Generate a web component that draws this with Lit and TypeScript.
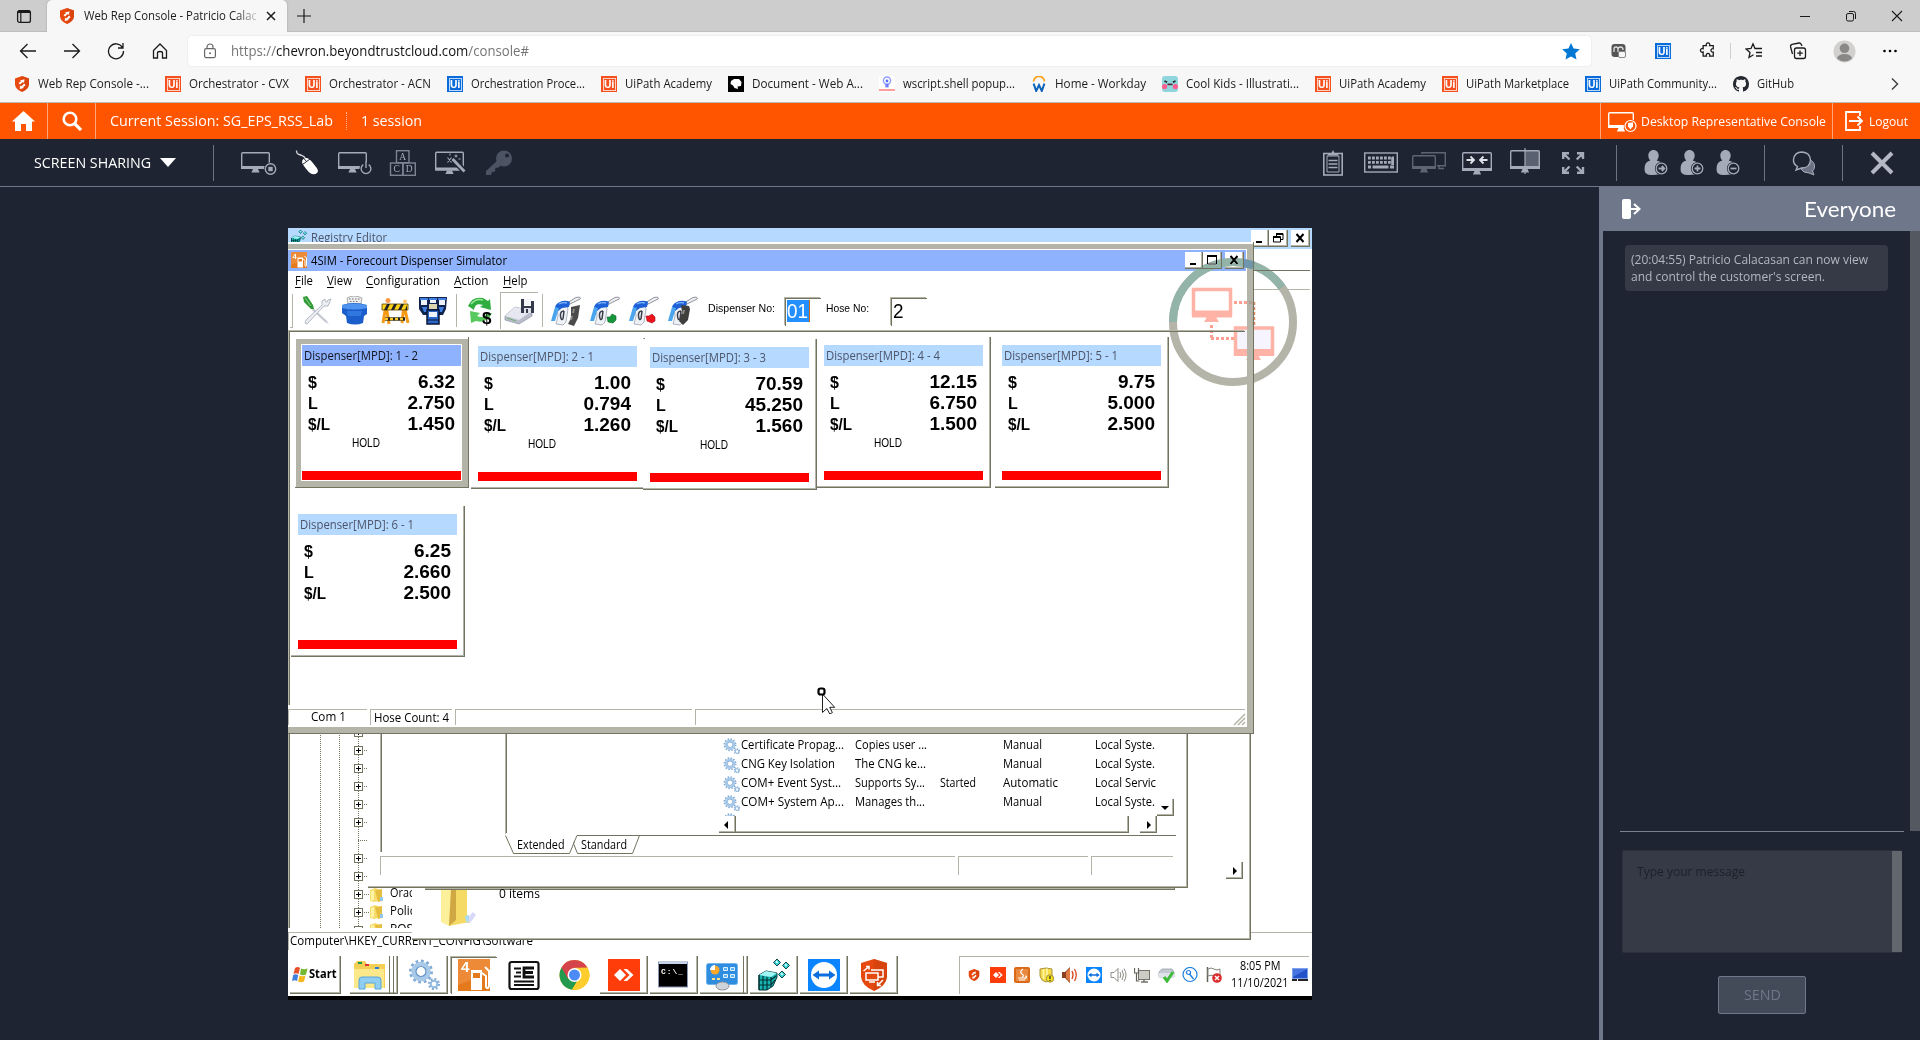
import { LitElement, html, svg, css, nothing } from "lit";
import { customElement, property } from "lit/decorators.js";

/* A single line of text condensed or widened to a given pixel width. */
@customElement("fit-text")
class FitText extends LitElement {
  @property({ type: Number }) w = 0;
  static styles = css`
    :host { display: inline-block; white-space: pre; flex: none; }
    .in { display: inline-block; transform-origin: 0 50%; }
  `;
  render() {
    return html`<span class="in"><slot></slot></span>`;
  }
  updated() {
    const el = this.renderRoot.querySelector(".in") as HTMLElement;
    el.style.transform = "none";
    const n = el.getBoundingClientRect().width;
    if (this.w && n) {
      el.style.transform = `scaleX(${this.w / n})`;
      this.style.width = `${this.w}px`;
    }
  }
}

const ft = (w: number, t: unknown) => html`<fit-text .w=${w}>${t}</fit-text>`;
const pic = (w: number, h: number, body: unknown) =>
  html`<svg width=${w} height=${h} viewBox="0 0 ${w} ${h}">${body}</svg>`;

/* ---------- shared icons ---------- */
const shield = (c = "#e8490f") => svg`
  <path d="M8 0 L15 2.6 V8.5 Q14.6 13 8 16 Q1.4 13 1 8.5 V2.6Z" fill=${c}/>
  <path d="M8 0 L15 2.6 V8.5 Q14.6 13 8 16Z" fill="#c93c08" opacity=".45"/>
  <path d="M6 4.5 L10.5 3.2 L10 7 L8.8 6 L6 8.5 L4.5 7 L7 5.2Z" fill="#fff"/>
  <path d="M10.2 7.6 L11.6 9.3 L9 11.2 L10 12 L5.8 13 L6 9.6 L7.2 10.4Z" fill="#fff"/>`;
const ui = (c: string) => html`<span class="ui" style="background:${c}"><b>Ui</b></span>`;
const OR = "#f4511e", BL = "#0a6cdb";

const bmIcon = (k: string) => {
  switch (k) {
    case "shield": return pic(16, 16, shield());
    case "uo": return ui(OR);
    case "ub": return ui(BL);
    case "doc": return pic(16, 16, svg`<rect width="16" height="16" fill="#000"/><path d="M3 5 L6 3 L11 3 L13.5 6 L13 10 L9.5 10.5 L10 13 L6.5 12 L5 9.5 L2.5 8Z" fill="#fff"/>`);
    case "ws": return pic(16, 16, svg`<rect width="16" height="16" fill="#fff"/><circle cx="8" cy="4.6" r="3.6" fill="none" stroke="#8f9dff" stroke-width="1.4"/><circle cx="8" cy="5" r="1.4" fill="#5a6cff"/><path d="M6.4 8h3.2v3.4H6.4z" fill="#6f7fff"/><path d="M0 14h16" stroke="#ff9d9d" stroke-width="2"/>`);
    case "wd": return pic(16, 16, svg`<path d="M2.6 5.4 A5.4 5 0 0 1 13.4 5.4" fill="none" stroke="#f9a01b" stroke-width="1.8"/><path d="M2.6 7.6 L5.2 15 L8 9 L10.8 15 L13.4 7.6" fill="none" stroke="#0b63b8" stroke-width="2"/>`);
    case "ck": return pic(16, 16, svg`<rect width="16" height="16" rx="3" fill="#8fd6dc"/><circle cx="2.6" cy="10.6" r="2.6" fill="#ff5d8f"/><circle cx="13.4" cy="10.6" r="2.6" fill="#ff5d8f"/><path d="M2.5 5l2.6 1.2M13.5 5l-2.6 1.2" stroke="#222" stroke-width="1.6"/><path d="M5.5 8.4h5" stroke="#5a2030" stroke-width="1.6"/>`);
    default: return pic(16, 16, svg`<path fill="#24292f" d="M8 0C3.58 0 0 3.58 0 8c0 3.54 2.29 6.53 5.47 7.59.4.07.55-.17.55-.38 0-.19-.01-.82-.01-1.49-2.01.37-2.53-.49-2.69-.94-.09-.23-.48-.94-.82-1.13-.28-.15-.68-.52-.01-.53.63-.01 1.08.58 1.23.82.72 1.21 1.87.87 2.33.66.07-.52.28-.87.51-1.07-1.78-.2-3.64-.89-3.64-3.95 0-.87.31-1.59.82-2.15-.08-.2-.36-1.02.08-2.12 0 0 .67-.21 2.2.82.64-.18 1.32-.27 2-.27s1.36.09 2 .27c1.53-1.04 2.2-.82 2.2-.82.44 1.1.16 1.92.08 2.12.51.56.82 1.27.82 2.15 0 3.07-1.87 3.75-3.65 3.95.29.25.54.73.54 1.48 0 1.07-.01 1.93-.01 2.2 0 .21.15.46.55.38A8.01 8.01 0 0 0 16 8c0-4.42-3.58-8-8-8z"/>`);
  }
};
const BOOKMARKS: [string, string, number][] = [
  ["shield", "Web Rep Console -...", 111], ["uo", "Orchestrator - CVX", 100],
  ["uo", "Orchestrator - ACN", 102], ["ub", "Orchestration Proce...", 114],
  ["uo", "UiPath Academy", 87], ["doc", "Document - Web A...", 111],
  ["ws", "wscript.shell popup...", 112], ["wd", "Home - Workday", 91],
  ["ck", "Cool Kids - Illustrati...", 113], ["uo", "UiPath Academy", 87],
  ["uo", "UiPath Marketplace", 103], ["ub", "UiPath Community...", 108],
  ["gh", "GitHub", 37],
];

/* ---------- session toolbar icons, 36 x 32 ---------- */
const G = "#a4aab8";
const mon = (x: number, y: number, w: number, h: number, c = G) => svg`
  <rect x=${x + 0.7} y=${y + 0.7} width=${w - 1.4} height=${h - 1.4} rx="1" fill="none" stroke=${c} stroke-width="1.4"/>
  <rect x=${x} y=${y + h - 3} width=${w} height="3" fill=${c}/>
  <path d="M${x + w / 2 - 2.5} ${y + h}h5l1.6 3.4h-8.2z" fill=${c}/>`;
const person = (m: unknown) => svg`
  <path d="M15.500 3c3 0 5.200 2.400 5.200 5.600 0 2-.8 3.600-2 5 4 1 7.300 3 7.300 8 0 5-3 6.400-10.500 6.400C8 28 6.600 26 6.600 22c0-5 2-7.400 5.700-8.400-1.300-1.400-2-3-2-5C10.300 5.400 12.500 3 15.500 3Z" fill="${G}"/>
  <circle cx="23.500" cy="21.500" r="6.600" fill="#1e2431"/><circle cx="23.500" cy="21.500" r="5.300" fill="#1e2431" stroke="${G}" stroke-width="1.300"/>
  <g stroke="${G}" stroke-width="1.800" fill="none">${m}</g>`;
const LEFT = [
  svg`${mon(0, 5, 29, 17)}<circle cx="29.500" cy="22" r="6.500" fill="#1e2431"/><circle cx="29.500" cy="22" r="5.200" fill="none" stroke="${G}" stroke-width="1.400"/><rect x="27.300" y="19.800" width="4.400" height="4.400" fill="${G}"/>`,
  svg`<path d="M7.500 3.500c0 4 1.500 3.500 4 4.500s4 1 5 4" fill="none" stroke="#cfd3dc" stroke-width="1.400"/><path d="M14 12.500c3-3 6.500-1 9.500 3s7.500 8 4.500 10.500-7 1-9.500-2.500-7.500-8-4.500-11Z" fill="#fff"/><path d="M13.500 17.500l7.500-5.500M17.500 14.500l-3-3.500" stroke="#1e2431" stroke-width="1"/>`,
  svg`${mon(1, 5, 29, 17)}<circle cx="29" cy="21.500" r="6.500" fill="#1e2431"/><path d="M26.300 17.600a4.900 4.900 0 1 0 5.400 0M29 14.500v6.500" fill="none" stroke="${G}" stroke-width="1.400"/>`,
  svg`<g fill="none" stroke="#7c8494" stroke-width="1.400"><rect x="11.500" y="3.700" width="12.500" height="12"/><rect x="5.500" y="16" width="12.300" height="12.300"/><rect x="18" y="16" width="12.300" height="12.300"/></g><g font-family="Liberation Serif" font-size="9.500" fill="${G}" text-anchor="middle"><text x="17.800" y="13">A</text><text x="11.700" y="25.400">C</text><text x="24.200" y="25.400">D</text></g>`,
  svg`${mon(2, 4.5, 29, 19)}<path d="M19 11l13 14" stroke="#1e2431" stroke-width="6"/><path d="M19.500 12l12 12.500" stroke="${G}" stroke-width="2.800"/><path d="M14.500 10.500l4 5M18.500 10.500l-4 5M23 7.500v3M21.500 9h3M17 6.500v2M25.500 12h2" stroke="${G}" stroke-width="1.100"/>`,
  svg`<circle cx="23" cy="11.500" r="8" fill="#4c5362"/><circle cx="26" cy="8.500" r="2" fill="#1e2431"/><path d="M18 12L5 24v4h5l1-3 3-.5.5-3.500 3-.5 5-5z" fill="#4c5362"/>`,
];
const RIGHT = [
  svg`<rect x="8.800" y="6.500" width="18.400" height="21.500" fill="none" stroke="${G}" stroke-width="1.600"/><path d="M12 9h12v16H12z" fill="none" stroke="${G}" stroke-width="1"/><path d="M12 8.500h12l-2-2.500h-2.500l-1.500-3-1.500 3H14z" fill="${G}"/><path d="M13.500 13.500h9M13.500 17h9M13.500 20.500h9" stroke="${G}" stroke-width="1.600"/>`,
  svg`<rect x="1.700" y="6" width="32.600" height="19" fill="none" stroke="${G}" stroke-width="1.400"/><path d="M5 11h26M5 15.300h26" stroke="${G}" stroke-width="2.800" stroke-dasharray="2.800 1.200"/><path d="M5 20h3M9.500 20h16M27 20h4M29.600 10v8" stroke="${G}" stroke-width="2.800"/>`,
  svg`<g opacity=".48"><path d="M11 7V5.700h23.300v13H26M28 19v2.500h5" fill="none" stroke="${G}" stroke-width="1.400"/>${mon(1, 8, 24, 14)}</g>`,
  svg`${mon(3, 5, 30, 19)}<path d="M7.500 13h7M11.500 9.500l3.500 3.500-3.500 3.500M28.500 13h-7M24.500 9.500L21 13l3.500 3.500" fill="none" stroke="#dfe2e8" stroke-width="1.800"/>`,
  svg`<rect x="18" y="4" width="14" height="15" fill="#5a6170"/>${mon(3, 3, 30, 19)}<path d="M18 1v26" stroke="${G}" stroke-width="1.200"/>`,
  svg`<g fill="none" stroke="${G}" stroke-width="2.400"><path d="M8.200 12V6.200H14M8.500 6.500l6 6M28 12V6.200H22M27.700 6.500l-6 6M8.200 20v5.800H14M8.500 25.500l6-6M28 20v5.800H22M27.700 25.500l-6-6"/></g>`,
];
const PEOPLE = [
  person(svg`<path d="M20.500 21.500h5.500M23.800 19l2.500 2.500-2.500 2.500"/>`),
  person(svg`<path d="M20.500 21.500h6M23.500 18.500v6"/>`),
  person(svg`<path d="M20.500 21.500h6"/>`),
];

/* ---------- remote desktop ---------- */
const T = (x: number, cy: number, w: number, t: unknown, cls = "") =>
  html`<fit-text class="t ${cls}" style="left:${x - 0.5}px;top:${cy - 10.5}px" .w=${w}>${t}</fit-text>`;
const P = (x: number, y: number, w: number, h: number, body: unknown, cls = "") =>
  html`<svg class="p ${cls}" style="left:${x}px;top:${y}px" width=${w} height=${h} viewBox="0 0 ${w} ${h}">${body}</svg>`;
const B = (cls: string, x: number, y: number, w: number, h: number, body: unknown = nothing) =>
  html`<div class="b ${cls}" style="left:${x}px;top:${y}px;width:${w}px;height:${h}px">${body}</div>`;

const pump = svg`<rect width="32" height="32" fill="#e57a1c"/><path d="M0 0h32v14L0 26z" fill="#f0954a" opacity=".6"/><path d="M13 11h11v20H13z" fill="#fff"/><path d="M15 14h7v5h-7z" fill="#e57a1c"/><path d="M24 14l4 3v11q2 3 3-1V12l-4-4" fill="none" stroke="#fff" stroke-width="2"/><text x="3" y="13" font-family="Liberation Sans" font-weight="bold" font-size="15" fill="#fff">4</text>`;
const gear = svg`<circle cx="13" cy="12.500" r="10" fill="none" stroke="#7fa9d4" stroke-width="4" stroke-dasharray="2.600 2.600"/><circle cx="13" cy="12.500" r="7.500" fill="#fff" stroke="#a9c9e8" stroke-width="4.500"/><circle cx="13" cy="12.500" r="5" fill="#fff" stroke="#5f92c8" stroke-width="1.200"/><circle cx="26" cy="25" r="4.500" fill="none" stroke="#7fa9d4" stroke-width="3" stroke-dasharray="1.800 1.700"/><circle cx="26" cy="25" r="3.300" fill="#fff" stroke="#94bbe0" stroke-width="2"/>`;
const folder = svg`<path d="M0 2l5-2 3 1v12l-4 1-4-1z" fill="#f6dc6c"/><path d="M5 2l7-1v12l-4 1z" fill="#e5bd3f"/><path d="M1 3l3-1v10l-3 1z" fill="#fff3a6"/><path d="M10 9h3v4h-3z" fill="#8fc7ee"/>`;
const cubes = svg`<path d="M1 16l7-4 11 2v4l-4 9-6 4H1z" fill="#18b3b3" stroke="#033" stroke-width="1"/><path d="M1 16l7-4 11 2-6 4z" fill="#9ff4f4"/><path d="M5 17v14M9 18v13M13 18v10M1 21h12l5-4M1 26h12l4-5M1 16v15" stroke="#033" stroke-width="1.200" fill="none"/><g fill="#35cfd4" stroke="#033" stroke-width=".9"><path d="M19 0l3.500 3.500L19 7l-3.500-3.500zM28 3l3.500 3.500L28 10l-3.500-3.500zM24 12l3.500 3.500L24 19l-3.500-3.500z"/></g><path d="M18 2l1.500 2M27 5l1.500 2M23 14l1.500 2" stroke="#dff" stroke-width="1.500"/>`;
const tv = svg`<rect width="32" height="32" fill="#0a84ff"/><circle cx="16" cy="16" r="13" fill="#fff"/><path d="M4.500 16l6.500-4.500v3h10v-3l6.500 4.500-6.500 4.500v-3H11v3z" fill="#0a6ee0"/>`;
const anyd = svg`<rect width="32" height="32" fill="#ff3d0a"/><path d="M6 16l6-6 6 6-6 6z" fill="#fff"/><path d="M15.500 10h3.500l6.500 6-6.500 6h-3.500l6-6z" fill="#fff"/>`;
const nozzle = (extra: unknown) => svg`
  <path d="M16 7l9-5.500q4-1 4.500.5-.2 1.700-2.500 2L18 8.500z" fill="#f0f1f4" stroke="#80858f" stroke-width=".9"/>
  <path d="M6 12l10-2 1 3-2 13-3 3-7-1 2-8z" fill="#eff2f7" stroke="#9aa1b0" stroke-width=".8"/>
  <path d="M4 11q1-4 7-6 5-1 8 1l-1 5-7 1-4 3z" fill="#1c5fd6"/><path d="M8 8q4-2 8-1" stroke="#7db4f5" stroke-width="1.300" fill="none"/>
  <path d="M4 11l4 1-4 13-4 0z" fill="#4aa4ee"/>
  <path d="M13 15q-4 0-3.500 5t2.500 3M13 15l-1 8" fill="none" stroke="#3a3e48" stroke-width="1.500"/>${extra}`;
const TOOLS: [number, unknown][] = [
  [14, svg`<path d="M11 12l13 12 3 4-4-2-13-12z" fill="#c2c6d0"/><path d="M29 3l-3 1-1 2-2-1 0-2-3 2 0 4L4 24q-2 4 1 4l17-18 4 0z" fill="#eceef3" stroke="#a3a8b6" stroke-width=".8"/><path d="M1 1l4-1 6 9 1 4-3 0-7-7z" fill="#2f9a35"/><path d="M3 2l6 8" stroke="#8fd08a" stroke-width="1"/>`],
  [53, svg`<path d="M6 2q7-4 15 0l-1 6H7z" fill="#ececec" stroke="#999" stroke-width=".8"/><path d="M8 3h11M9 5.500h9" stroke="#777" stroke-dasharray="1.500 1.500"/><path d="M1 9q12-4 25 0v9l-3 2-1 7q-8 3-16 0l-1-7-4-3z" fill="#1b5ecb"/><path d="M1 9q12-3 25 0v3q-13 3-25 0z" fill="#4d93ef"/><path d="M6 15h15l-1 5H7z" fill="#3078df"/>`],
  [92, svg`<path d="M6 9L3 27M6 9l3 19M24 9l-2 18M24 9l4 18" stroke="#f59a14" stroke-width="3" fill="none"/><path d="M5 23h20" stroke="#222" stroke-width="3.500"/><path d="M5 23h20" stroke="#ffc928" stroke-width="2.600" stroke-dasharray="3 2"/><path d="M2 8h26v6H2z" fill="#ffd21a" stroke="#5a4200" stroke-width=".8"/><path d="M4 14l3-6h3l-3 6zM11 14l3-6h3l-3 6zM18 14l3-6h3l-3 6zM25 14l2-5v5z" fill="#222"/><circle cx="8" cy="4.500" r="2.500" fill="#ff9a4a"/><circle cx="25" cy="5.500" r="2" fill="#ffc46a"/>`],
  [130, svg`<path d="M1 1h28l-1 12-3 6H5l-4-6z" fill="#10244f"/><path d="M3 4h6v5H3zM12 4h6v3h-6zM21 4h6v5h-6z" fill="#eef3fb"/><path d="M2 2h8v2H2zM11 2h8v2h-8zM20 2h8v2h-8z" fill="#3f7fe0"/><path d="M4 11h5v5H6zM21 11h5l-2 5h-3z" fill="#3f7fe0"/><path d="M11 8h8v5h-8z" fill="#dcd6b0"/><path d="M9 14h12v14H9z" fill="#2a66c4" stroke="#0a1638" stroke-width="1.500"/><path d="M11 16h8v5h-8z" fill="#eef3fb"/><path d="M9 24h12" stroke="#0a1638"/>`],
  [178, svg`<path d="M2 10Q6 0 17 2l5 3 2-2 1 11-11-3 3-2q-8-3-9 5z" fill="#2fae3f"/><path d="M5 8q5-6 12-4" stroke="#9ae59a" stroke-width="1.500" fill="none"/><path d="M26 17q-5 11-16 8l-5 2-1-12 10 2-3 3q7 3 10-3z" fill="#57c95f"/><text x="16" y="28" font-family="Liberation Sans" font-weight="bold" font-size="17" fill="#000">$</text>`],
  [216, svg`<path d="M1 20l10-9 17 4v5l-13 8-14-4z" fill="#b9bccb" stroke="#8f93a4" stroke-width=".7"/><path d="M1 20l10-9 17 4-13 9z" fill="#e6e7f0"/><path d="M3 22l9 3" stroke="#6fb26f" stroke-width="1"/><path d="M17 3h3v7h7V5h3v12H17z" fill="#343a4a"/><path d="M20 3h7v6h-7z" fill="#f4f4f8"/><path d="M20 12h7v5h-7z" fill="#dfe2ea"/><path d="M22 13h2v4h-2z" fill="#343a4a"/>`],
  [263, nozzle(svg`<path d="M20 11l9-2-2 13-4 8-6-2 3-6z" fill="#4a4b4a"/><path d="M22 13l2 0-1 4-2 0zM20 20l2 0-1 4-2 0z" fill="#8b8d88"/>`)],
  [302, nozzle(svg`<path d="M17 21l3 0 2-3 4 2 0 4-3 3-5-1z" fill="#16953b" stroke="#0c6a28" stroke-width=".6"/>`)],
  [341, nozzle(svg`<path d="M17 20l3 0 3-2 3 3 0 4-3 2-5-2z" fill="#ee131d" stroke="#a30f16" stroke-width=".6"/>`)],
  [380, nozzle(svg`<path d="M13 9l8 1 1 3-2 11-5 5-4-4 3-9z" fill="#3e3f3d"/><path d="M15 14l2 0-1 4-2 0z" fill="#8b8d88"/>`)],
];

interface Card { x: number; y: number; n: string; a: string; l: string; p: string; hold: boolean; on?: boolean }
const CARDS: Card[] = [
  { x: 14, y: 117, n: "1 - 2", a: "6.32", l: "2.750", p: "1.450", hold: true, on: true },
  { x: 190, y: 118, n: "2 - 1", a: "1.00", l: "0.794", p: "1.260", hold: true },
  { x: 362, y: 119, n: "3 - 3", a: "70.59", l: "45.250", p: "1.560", hold: true },
  { x: 536, y: 117, n: "4 - 4", a: "12.15", l: "6.750", p: "1.500", hold: true },
  { x: 714, y: 117, n: "5 - 1", a: "9.75", l: "5.000", p: "2.500", hold: false },
  { x: 10, y: 286, n: "6 - 1", a: "6.25", l: "2.660", p: "2.500", hold: false },
];
const card = (c: Card) => html`
  <div class="card ${c.on ? "on" : ""}" style="left:${c.x - 7}px;top:${c.y - 8}px">
    <div class="face">
      <div class="ct">${ft(114, `Dispenser[MPD]: ${c.n}`)}</div>
      <div class="row"><b>$</b><i>${c.a}</i></div>
      <div class="row"><b>L</b><i>${c.l}</i></div>
      <div class="row"><b>${ft(22, "$/L")}</b><i>${c.p}</i></div>
      <div class="hold">${c.hold ? ft(28, "HOLD") : nothing}</div>
      <div class="red"></div>
    </div>
  </div>`;

const SERVICES: [string, number, string, number, string, string, number, string, number][] = [
  ["Certificate Propag...", 103, "Copies user ...", 72, "", "Manual", 39, "Local Syste.", 60],
  ["CNG Key Isolation", 94, "The CNG ke...", 71, "", "Manual", 39, "Local Syste.", 60],
  ["COM+ Event Syst...", 100, "Supports Sy...", 70, "Started", "Automatic", 55, "Local Servic", 61],
  ["COM+ System Ap...", 103, "Manages th...", 70, "", "Manual", 39, "Local Syste.", 60],
];
const winBtn = (x: number, y: number, w: number, k: string) => B("wb", x, y, w, 17, html`
  <svg width="18" height="16" viewBox="0 0 18 16" fill="none" stroke="#000" stroke-width="2">${
    k === "min" ? svg`<path d="M5 12h6"/>` :
    k === "max" ? svg`<path d="M4 4h10" stroke-width="2"/><path d="M4.500 3.500h9v8.500h-9z" stroke-width="1"/>` :
    k === "res" ? svg`<path d="M7 4h7M4 7h7" stroke-width="2"/><path d="M7.500 6V3.500h6.500v6h-2.500M4.500 6.500h7v5.500h-7z" stroke-width="1"/>` :
    svg`<path d="M5.500 4l7 8M12.500 4l-7 8"/>`}</svg>`);
const TREE = [504, 522, 540, 558, 576, 594, 612, 630, 648, 666, 684, 702];

@customElement("remote-desktop")
class RemoteDesktop extends LitElement {
  static styles = css`
    :host { display: block; position: relative; width: 1024px; height: 772px; background: #fff; overflow: hidden; font: 12px/20px "Open Sans", "Noto Sans", sans-serif; color: #000; }
    .t, .p, .b, .card { position: absolute; box-sizing: border-box; }
    .t { line-height: 20px; }
    .arial { font-family: "Liberation Sans", sans-serif; }
    .small { font-size: 11.500px; }
    .big { font-family: "Liberation Sans", sans-serif; font-size: 20px; }
    .bold { font-weight: 700; }
    .dim { color: #4d5468; }
    .white { color: #fff; }
    u { text-underline-offset: 2px; }
    .lb { background: #b5d9ff; }
    .tb { background: #8fb2ff; }
    .gray { background: #b4b4a8; }
    .dark { background: #73735f; }
    .black { background: #000; }
    .sel { background: #2490ff; border-right: 1px solid #d06a10; }
    .w { background: #fff; }
    .clip { overflow: hidden; }
    .veil { mix-blend-mode: darken; }
    .wb { background: #fff; border-right: 1px solid #73735f; border-bottom: 1px solid #73735f; box-shadow: inset -1px -1px #b4b4a8; }
    .wb svg { display: block; }
    .out { background: #fff; border-right: 1px solid #73735f; border-bottom: 1px solid #73735f; box-shadow: inset -1px -1px #b4b4a8; }
    .in { border-top: 1px solid #b4b4a8; border-left: 1px solid #b4b4a8; }
    .inp { border-top: 1px solid #73735f; border-left: 1px solid #73735f; box-shadow: -1px -1px #b4b4a8; }
    .card { width: 174px; height: 151px; padding: 8px 7px; background: #fff; border-right: 1px solid #73735f; border-bottom: 1px solid #73735f; box-shadow: inset -1px -1px #b4b4a8; }
    .card.on { background: linear-gradient(#b4b4a8, #b4b4a8) 1px 2px / 100% 100% no-repeat #fff; box-shadow: none; }
    .face { width: 159px; height: 135px; background: #fff; display: flex; flex-direction: column; }
    .on .face { box-shadow: 0 0 0 1px #fff; }
    .ct { height: 21px; line-height: 21px; padding-left: 2px; background: #b5d9ff; color: #4d5468; margin-bottom: 5px; }
    .on .ct { background: #8fb2ff; color: #10131c; }
    .row { height: 21px; display: flex; justify-content: space-between; align-items: center; padding: 0 6px 0 6px; font-family: "Liberation Sans", sans-serif; }
    .row b { font-size: 16px; position: relative; top: 1px; }
    .row i { font: bold 19px/20px "Liberation Sans", sans-serif; }
    .hold { height: 37px; padding: 0 0 0 50px; line-height: 18px; font-family: "Liberation Sans", sans-serif; font-size: 12px; box-sizing: border-box; }
    .red { height: 9px; background: #f00; }
  `;
  render() {
    return html`
      ${B("lb", 0, 0, 1024, 21)}
      ${P(3, 2, 16, 16, svg`<g transform="scale(.5)">${cubes}</g>`)}
      ${T(23, 10.5, 76, "Registry Editor", "dim")}
      ${winBtn(963, 2, 18, "min")}${winBtn(981, 2, 19, "res")}${winBtn(1003, 2, 19, "x")}
      ${B("dark", 965, 42, 57, 1)}${B("gray", 965, 61, 57, 1)}
      ${B("gray", 962, 704, 62, 1)}

      ${B("gray", 0, 505, 1, 195)}${B("dark", 1, 505, 1, 195)}
      <div class="b clip" style="left:0;top:505px;width:124px;height:195px">
        <svg class="p" style="left:0;top:0" width="124" height="195" viewBox="0 505 124 195">
          <g stroke="#73735f" stroke-dasharray="1 1"><path d="M32.500 505v195M51.500 505v195M70.500 505v195"/>
          ${TREE.map((y) => svg`<path d="M70 ${y + 0.5}H${y > 660 ? 82 : 79}"/>`)}</g>
          ${TREE.filter((y) => y !== 612).map((y) => svg`<rect x="66.500" y=${y - 3.5} width="8" height="8" fill="#fff" stroke="#73735f"/><path d="M68 ${y + 0.5}h5M70.500 ${y - 2}v5" stroke="#000"/>`)}
        </svg>
        ${P(82, 155, 14, 14, folder)}${P(82, 172, 14, 14, folder)}${P(82, 190, 14, 14, folder)}
        ${T(102, 160.5, 33, "Oracle")}${T(102, 178.5, 40, "Policies")}${T(102, 196, 23, "POS")}
      </div>
      ${B("gray", 0, 704, 124, 1)}${B("gray", 0, 704, 1, 18)}
      ${T(2.5, 713.5, 243, "Computer\\HKEY_CURRENT_CONFIG\\Software")}

      ${B("out", 124, 490, 839, 222)}
      ${B("out", 137, 490, 750, 172)}
      ${P(153, 662, 36, 38, svg`<path d="M22 33l10-11 3 3-6 8z" fill="#d9d9fb"/><path d="M0 0h10v34l-2 2-8-4z" fill="#fdf09a"/><path d="M10 0h16v24l2 8-10 2-10 2z" fill="#f6da66"/><path d="M10 0h5v30l-7 6z" fill="#cfa844"/><path d="M24 26l4-1v6l-3 1z" fill="#a9dcf5"/>`)}
      ${T(211, 666.5, 41, "0 items")}
      ${B("out", 938, 634, 17, 17)}${P(943, 638, 8, 10, svg`<path d="M2 1l4 4-4 4z"/>`)}

      ${B("out", 80, 490, 820, 170)}
      ${B("gray", 92, 490, 1, 134)}${B("dark", 93, 490, 1, 134)}
      ${B("gray", 217, 490, 1, 116)}${B("dark", 218, 490, 1, 115)}
      ${SERVICES.map((s, i) => {
        const y = 517.5 + i * 19;
        return html`${P(435, y - 8, 17, 16, svg`<g transform="scale(.54)">${gear}</g>`)}
          ${T(453.5, y, s[1], s[0])}${T(567, y, s[3], s[2])}
          ${s[4] ? T(652.5, y, 36, s[4]) : nothing}
          ${T(715, y, s[6], s[5])}${T(807, y, s[8], s[7])}`;
      })}
      ${P(435, 585, 17, 3, svg`<g transform="scale(.54)">${gear}</g>`)}
      ${B("out", 431, 588, 17, 17)}${B("out", 448, 588, 393, 17)}${B("out", 852, 588, 17, 17)}${B("out", 869, 571, 17, 17)}
      ${P(434, 592, 8, 10, svg`<path d="M6 1l-4 4 4 4z"/>`)}${P(857, 592, 8, 10, svg`<path d="M2 1l4 4-4 4z"/>`)}${P(872, 576, 10, 8, svg`<path d="M1 2l4 4 4-4z"/>`)}
      ${P(216, 605, 674, 22, svg`<g fill="none" stroke="#73735f"><path d="M1.500 2.500l8 18h56l5-12M73 2.500h599M73 2.500l-3.500 8 4 10h55l7-18"/></g>`)}
      ${T(229, 617, 47.5, "Extended")}${T(293.5, 617, 46, "Standard")}
      ${B("in", 92, 628, 575, 19)}${B("in", 670, 628, 130, 19)}${B("in", 803, 628, 82, 19)}

      <div class="b w" style="left:0;top:14px;width:966px;height:492px"></div>
      ${B("gray", 0, 16, 965, 5)}${B("gray", 959, 16, 6, 489)}${B("gray", 0, 499, 965, 6)}
      ${B("dark", 965, 14, 1, 492)}${B("dark", 0, 505, 966, 1)}
      ${B("tb", 0, 22, 958, 21)}
      ${P(3, 24, 16, 16, svg`<g transform="scale(.5)">${pump}</g>`)}
      ${T(23.5, 33, 196, "4SIM - Forecourt Dispenser Simulator")}
      ${winBtn(897, 24, 18, "min")}${winBtn(915, 24, 19, "max")}${winBtn(937, 24, 19, "x")}
      ${T(7, 53.5, 18, html`<u>F</u>ile`)}${T(39, 53.5, 25, html`<u>V</u>iew`)}${T(78, 53.5, 74, html`<u>C</u>onfiguration`)}${T(166, 53.5, 34.5, html`<u>A</u>ction`)}${T(215, 53.5, 24.5, html`<u>H</u>elp`)}

      ${B("gray", 4, 66, 1, 33)}${B("gray", 2, 99, 3, 1)}${B("gray", 168, 66, 1, 33)}${B("gray", 254, 66, 1, 33)}
      ${B("in", 212, 64, 38, 37)}
      ${TOOLS.map(([x, b]) => P(x, 68, 32, 31, b))}
      ${T(420.5, 80, 67, "Dispenser No:", "arial small")}${T(538.5, 80, 43, "Hose No:", "arial small")}
      ${B("inp", 497, 70, 36, 28)}${B("sel", 499, 72, 23, 22)}${T(499.5, 83, 21, "01", "big white")}
      ${B("inp", 603, 70, 36, 28)}${T(605.5, 83, 10.5, "2", "big")}
      ${B("gray", 0, 102, 956, 1)}${B("dark", 1, 103, 956, 1)}${B("gray", 0, 102, 1, 375)}${B("dark", 1, 103, 1, 374)}

      ${CARDS.map(card)}

      ${B("in", 0, 481, 79, 16)}${B("in", 82, 481, 82, 16)}${B("in", 167, 481, 237, 16)}${B("in", 407, 481, 550, 16)}
      ${T(23.5, 489, 35, "Com 1")}${T(86.5, 490, 75, "Hose Count: 4")}
      ${P(945, 485, 13, 13, svg`<path d="M1 12L12 1M5 12l7-7M9 12l3-3" stroke="#b4b4a8" stroke-width="1.500"/>`)}

      ${this.taskbar()}

      ${P(880, 29, 130, 130, svg`
        <circle cx="65" cy="65" r="60" fill="none" stroke="#b4b4a8" stroke-width="8"/>
        <path d="M5 65A60 60 0 0 1 114 30.500" fill="none" stroke="#92b4a9" stroke-width="8"/>
        <path d="M75.500 6A60 60 0 0 1 85.500 8.500" fill="none" stroke="#6f95b5" stroke-width="8"/>
        <g fill="none" stroke="#ffb3a7" stroke-width="3.500"><rect x="25.500" y="32.500" width="37" height="25.500"/><rect x="67.500" y="71" width="37" height="25.500" fill="#e0dcff" fill-opacity=".3"/></g>
        <g fill="#ffb3a7"><path d="M24 53.500h40v7H24zM39 60h9l3 5H36zM66 92h40v7H66zM81 98h9l3 5H78z"/></g>
        <path d="M66 45.500h20" stroke="#ff9f92" stroke-width="3" stroke-dasharray="3 2"/><path d="M86 45v25" stroke="#e0895f" stroke-width="2.500" stroke-dasharray="3 2"/>
        <path d="M43.500 68v14M43 81.500h24" stroke="#ff9f92" fill="none" stroke-width="3" stroke-dasharray="3 2"/>`, "veil")}
      ${P(528, 458, 20, 28, svg`<path d="M6.500 8v18.500l4.300-4 3 5.500 2.600-1.400-2.700-5.300h5z" fill="#fff" stroke="#222"/><rect x="2.500" y="2.500" width="6" height="6" rx="2" fill="#fff" stroke="#000" stroke-width="2.200"/>`)}
      ${B("black", 0, 768, 1024, 4)}
    `;
  }
  taskbar() {
    return html`
      ${B("out", 2, 728, 51, 38)}
      ${P(4, 738, 17, 17, svg`<path d="M3 2q3-2 5 0L6.500 8q-2.500-1.500-5 0z" fill="#e8502a"/><path d="M9 2.500q3 1.500 6.500 0L14 8.500q-3 1.500-6 0z" fill="#73b82e"/><path d="M1.200 9q2.500-1.500 5 0L5 15q-2.500-1.500-5 0z" fill="#3f7fe0"/><path d="M7.500 9.500q3 1.500 6 0L12 15.500q-3 1.500-6 0z" fill="#f7b81e"/>`)}
      ${T(21, 746.5, 27.5, "Start", "bold")}
      ${B("out", 62, 728, 48, 38)}${B("dark", 101, 728, 1, 37)}${B("dark", 105, 728, 1, 37)}
      ${P(66, 731, 32, 32, svg`<path d="M0 5l3-3h8l2 3h18v24H0z" fill="#f3cf55"/><path d="M0 10h30v19H0z" fill="#fbe88a"/><path d="M4 3h4v2H4z" fill="#1a9a4a"/><path d="M11 5h4v2h-4z" fill="#d33"/><path d="M21 8h4v2h-4z" fill="#2b7fd0"/><path d="M5 30v-9q0-3 3-3h16q3 0 3 3v9h-6v-6H11v6z" fill="#8fcdf2" stroke="#5ba6d8"/>`)}
      ${B("out", 112, 728, 48, 38)}${P(120, 731, 32, 32, gear)}
      ${B("inp", 163, 729, 46, 37)}${P(170, 731, 32, 32, pump)}
      ${P(220, 732, 32, 31, svg`<rect x="1.500" y="2" width="29" height="27" rx="2" fill="#fff" stroke="#111" stroke-width="2.200"/><path d="M6 8.500h7M8 12.500h5M6 16.500h7M6 21.500h20M6 25h20" stroke="#111" stroke-width="2"/><path d="M26 8H16v9h10M16 12.500h9" stroke="#111" stroke-width="2.800" fill="none"/>`)}
      ${P(271, 731, 32, 32, svg`<circle cx="15.500" cy="16" r="15" fill="#fccd2c"/><path d="M15.500 16L2.500 8.500A15 15 0 0 0 13 30.800L20 19z" fill="#249a4e"/><path d="M2.500 8.500A15 15 0 0 1 28.500 8.700H15.500L9 19.700z" fill="#d5434b"/><path d="M28.500 8.700A15 15 0 0 1 13 30.800L22 16 18 9z" fill="#fccd2c"/><circle cx="15.500" cy="16" r="7" fill="#fff"/><circle cx="15.500" cy="16" r="5.500" fill="#4c8bf5"/>`)}
      ${B("out", 312, 728, 48, 38)}${P(320, 731, 32, 32, anyd)}
      ${B("out", 362, 728, 48, 38)}${P(370, 733, 31, 28, svg`<rect x=".5" y="1" width="29" height="25" fill="#000" stroke="#8a97b5"/><path d="M1 2h28" stroke="#c6d3ea" stroke-width="2"/><text x="3" y="13" font-family="Liberation Mono" font-weight="bold" font-size="8" textLength="22" fill="#fff">C:\\_</text>`)}
      ${B("out", 412, 728, 48, 38)}${B("dark", 455, 728, 1, 37)}
      ${P(418, 733, 33, 30, svg`<rect x=".5" y="2.500" width="31" height="21" rx="2" fill="#2f8de0" stroke="#6fb4ee"/><circle cx="9" cy="9" r="4.500" fill="#f9a82a"/><path d="M9 9V4a5 5 0 0 0-5 5z" fill="#fff"/><path d="M17.500 6.500h4v3h-4zM24.500 6.500h4v3h-4zM17.500 13.500h4v3h-4zM24.500 13.500h4v3h-4z" fill="#5fb0f4" stroke="#dff0ff"/><path d="M6 18h3M11 18h3" stroke="#ffe08a" stroke-width="2"/><ellipse cx="16.500" cy="25" rx="6.500" ry="4" fill="#cfd3da" stroke="#8f939b"/>`)}
      ${B("out", 462, 728, 48, 38)}${P(470, 731, 33, 32, cubes)}
      ${B("out", 512, 728, 48, 38)}${P(520, 731, 32, 32, tv)}
      ${B("out", 562, 728, 48, 38)}
      ${P(572, 731, 29, 32, svg`<path d="M14 0l13 4v14q-1 9-13 14Q2 27 1 18V4z" fill="#e5490f"/><path d="M14 0l13 4v14q-1 9-13 14z" fill="#c93f0c" opacity=".5"/><g fill="none" stroke="#fff" stroke-width="1.500"><path d="M11 11h12v7h-5"/><rect x="6" y="14" width="12" height="7" fill="#e5490f"/><path d="M9 23h6M3.500 12l5-4M6 7.500h3v3M23 21l-5 5M17.500 23v3.500H21"/></g>`)}
      ${B("in", 671, 728, 350, 38)}
      ${P(680, 741, 12, 12, svg`<g transform="scale(.75)">${shield()}</g>`)}
      ${P(702, 739, 16, 16, svg`<g transform="scale(.5)">${anyd}</g>`)}
      ${P(726, 739, 16, 16, svg`<rect width="16" height="16" rx="2" fill="#d96a1a"/><rect x="2" y="2" width="12" height="12" fill="#e98a3e"/><path d="M9 2q-4 3-1 5t0 3M4 11h7M5 13h6M11 9q3 0 0 3" stroke="#fff" stroke-width="1.200" fill="none"/>`)}
      ${P(751, 739, 16, 16, svg`<path d="M1 2l6-1 6 1v7q-1 5-6 6-5-1-6-6z" fill="#f7dc4a" stroke="#a8903a"/><path d="M4.500 2v10M8 1.500v12" stroke="#fff6b0" stroke-width="1.500"/><circle cx="11" cy="11.500" r="3.700" fill="#f1e01a" stroke="#a8903a"/><path d="M11 9v3M11 13v1" stroke="#333" stroke-width="1.300"/>`)}
      ${P(774, 739, 17, 16, svg`<path d="M0 5h3l5-5v16l-5-5H0z" fill="#8a3f1e"/><path d="M4 5l4-4v14l-4-4z" fill="#e07a45"/><path d="M10 4q2 4 0 8M12.500 2q3.500 6 0 12" fill="none" stroke="#d9481a" stroke-width="1.300"/>`)}
      ${P(798, 739, 16, 16, svg`<g transform="scale(.5)">${tv}</g>`)}
      ${P(822, 739, 17, 16, svg`<path d="M1 5.500h3l4-4v13l-4-4H1z" fill="#fff" stroke="#8c8c84"/><path d="M10 5q1.500 3 0 6M12 3q3 5 0 10M14 1.500q4 6.500 0 13" fill="none" stroke="#8c8c84"/>`)}
      ${P(846, 739, 17, 16, svg`<rect x="4.500" y="3.500" width="11" height="9" fill="#ccccc4" stroke="#73736b"/><path d="M7 15h7M10 12v3" stroke="#73736b" stroke-width="1.500"/><path d="M.5 1v5h4V1M2.500 6v8h3" stroke="#62625a" fill="none" stroke-width="1.200"/>`)}
      ${P(870, 739, 17, 16, svg`<path d="M1 5l3-3h10l2 3v5H1z" fill="#c3cad3" stroke="#98a1ac" stroke-width=".8"/><path d="M1 6h15v4H1z" fill="#dfe4ea"/><path d="M6 10l3 4 6-9" fill="none" stroke="#3fba3c" stroke-width="3"/>`)}
      ${P(894, 739, 16, 16, svg`<circle cx="8" cy="7.500" r="7" fill="#fff" stroke="#1d7fe0" stroke-width="1.200"/><circle cx="6.500" cy="5.500" r="2" fill="none" stroke="#1d7fe0" stroke-width="1.200"/><path d="M7.500 7l4 5" stroke="#1d7fe0" stroke-width="1.400"/>`)}
      ${P(918, 739, 17, 16, svg`<path d="M1.500 0v15" stroke="#62625a" stroke-width="1.500"/><path d="M2 2q3-2 6 0t6 0v7q-3 1.500-6 0t-6 0z" fill="#fff" stroke="#84847c"/><circle cx="11" cy="11" r="4.800" fill="#dd2b2b"/><path d="M9 9l4 4M13 9l-4 4" stroke="#fff" stroke-width="1.400"/>`)}
      ${T(952, 738.5, 40.5, "8:05 PM")}${T(943.5, 755.5, 57.5, "11/10/2021")}
      ${P(1004, 740, 17, 14, svg`<rect x=".5" y=".5" width="15" height="10" fill="#2451c8" stroke="#7fa2e8"/><path d="M1 1h14L1 9z" fill="#5d8cf0" opacity=".6"/><path d="M0 11h5v2H0zM6 11h10v2H6z" fill="#222"/>`)}
    `;
  }
}

@customElement("app-root")
class AppRoot extends LitElement {
  static styles = css`
    :host { display: flex; flex-direction: column; width: 1920px; height: 1040px; overflow: hidden; background: #1e2431; font: 12px/20px "Open Sans", "Noto Sans", sans-serif; color: #1b1b1b; }
    * { box-sizing: border-box; }
    svg { display: block; flex: none; }
    .strip { height: 32px; background: #cdcdcd; border-bottom: 1px solid #bdbdbd; display: flex; align-items: center; flex: none; }
    .tabact { width: 47px; padding-left: 16px; }
    .tab { width: 240px; height: 32px; background: #f7f7f7; border-radius: 5px 5px 0 0; display: flex; align-items: center; padding: 0 10px 0 12px; gap: 10px; box-shadow: 0 0 2px #999; clip-path: inset(-3px -3px 0 -3px); align-self: flex-start; }
    .title { width: 172px; -webkit-mask-image: linear-gradient(90deg, #000 88%, transparent 103%); }
    .plus { margin-left: 9px; }
    .caps { margin-left: auto; display: flex; gap: 30px; padding-right: 17px; }
    .nav { height: 38px; background: #f7f7f7; display: flex; align-items: center; padding-left: 6px; flex: none; }
    .cell { width: 44px; display: flex; justify-content: center; }
    .addr { width: 1403px; height: 30px; background: #fff; border-radius: 4px; margin-left: 6px; display: flex; align-items: center; padding: 0 11px 0 15px; gap: 14px; font-size: 14px; box-shadow: 0 0 2px #ddd; }
    .addr .url { color: #757575; flex: 1; }
    .url span { color: #111; }
    .exts { display: flex; align-items: center; margin-left: 6px; }
    .exts .bar { width: 1px; height: 16px; background: #cfcfcf; margin: 0 1px; }
    .bm { height: 33px; background: #f7f7f7; border-bottom: 1px solid #bdbdb5; display: flex; align-items: center; gap: 16px; padding: 0 20px 4px 14px; flex: none; }
    .bm .item { display: flex; align-items: center; gap: 8px; }
    .bm .more { margin-left: auto; }
    .ui { width: 16px; height: 16px; display: block; padding: 1.500px; }
    .ui b { display: block; width: 13px; height: 13px; outline: 1px solid #fffb; outline-offset: -1px; color: #fff; font: bold 10.500px/13px "Open Sans", sans-serif; text-align: center; letter-spacing: -.3px; }
    .head { height: 36px; background: #ff5500; color: #fff; display: flex; align-items: center; flex: none; font-size: 14px; }
    .hc { height: 36px; display: flex; align-items: center; justify-content: center; border-right: 1px solid #ffa478; width: 48px; }
    .sess { margin-left: 14px; }
    .dot { width: 1px; height: 18px; border-left: 1px dotted #ffb08a; margin: 0 14px 0 13px; }
    .hr { margin-left: auto; height: 36px; display: flex; font-size: 13px; }
    .hr div { display: flex; align-items: center; border-left: 1px solid #ffa478; }
    .hr .a { width: 232px; padding-left: 6px; gap: 3px; }
    .hr .o { width: 88px; padding-left: 11px; gap: 5px; }
    .tools { height: 48px; border-bottom: 1px solid #6f778a; display: flex; align-items: center; flex: none; color: #fff; font-size: 14px; padding-left: 34px; }
    .tools .ic { width: 48px; display: flex; justify-content: center; }
    .tools .pp { width: 36px; display: flex; justify-content: center; }
    .v { width: 1px; height: 36px; background: #6b7283; }
    .tri { border: 8px solid transparent; border-top: 9px solid #fff; border-bottom: 0; margin: 0 37px 0 9px; }
    .grow { flex: 1; }
    .main { flex: 1; display: flex; min-height: 0; }
    .stage { width: 1599px; padding: 41px 0 0 288px; }
    .chat { width: 321px; border-left: 4px solid #6f778a; display: flex; flex-direction: column; }
    .ch { height: 44px; background: #6f778a; display: flex; align-items: center; justify-content: space-between; padding: 0 24px 1px 19px; color: #fff; font: 21px/40px "Lato", "Open Sans", sans-serif; flex: none; }
    .log { height: 600px; display: flex; justify-content: space-between; flex: none; }
    .msg { width: 263px; height: 46px; margin: 14px 0 0 22px; padding: 6px; border-radius: 4px; background: #363a46; color: #b3b7c1; font-size: 12px; line-height: 17px; display: flex; flex-direction: column; }
    .sb { width: 10px; background: #535861; }
    .rule { height: 1px; background: #7b8293; margin: 0 16px 0 17px; flex: none; }
    .box { margin: 18px 18px 0 19px; height: 103px; background: #363a46; border: 1px solid #2c303a; border-right: 0; border-radius: 2px; display: flex; justify-content: space-between; flex: none; color: #1c2029; }
    .ph { padding: 11px 0 0 14px; }
    .box .sb { background: #62666d; }
    .send { width: 88px; height: 38px; margin: 23px auto 0 115px; border: 1px solid #6f778a; border-radius: 2px; background: #434b59; color: #6f778a; font-size: 14px; display: flex; align-items: center; justify-content: center; padding-bottom: 1px; flex: none; }
  `;
  render() {
    const k = "#1b1b1b";
    return html`
      <div class="strip">
        <div class="tabact">${pic(16, 16, svg`<rect x="1.600" y="2.600" width="12.800" height="11.800" rx="2" fill="none" stroke=${k} stroke-width="1.300"/><path d="M1.500 4.500Q1.500 2 4 2h8q2.500 0 2.500 3h-13z" fill=${k}/><path d="M4.800 4v10" stroke=${k} stroke-width="1.200"/>`)}</div>
        <div class="tab">${pic(15, 16, shield())}<div class="title">${ft(173, "Web Rep Console - Patricio Calac")}</div>${pic(10, 10, svg`<path d="M1 1l8 8M9 1L1 9" stroke=${k} stroke-width="1.500"/>`)}</div>
        <div class="plus">${pic(16, 16, svg`<path d="M8 1v14M1 8h14" stroke=${k} stroke-width="1.200"/>`)}</div>
        <div class="caps">
          ${pic(12, 12, svg`<path d="M1 6.500h10" stroke=${k}/>`)}
          <span style="margin-left:4px">${pic(12, 12, svg`<rect x="1.500" y="3.500" width="7" height="7.500" rx="1.500" fill="none" stroke=${k}/><path d="M4 1.500h4.500q2 0 2 2V9" fill="none" stroke=${k}/>`)}</span>
          <span style="margin-left:4px">${pic(12, 12, svg`<path d="M1 1l10 10M11 1L1 11" stroke=${k} stroke-width="1.100"/>`)}</span>
        </div>
      </div>
      <div class="nav">
        <div class="cell">${pic(18, 18, svg`<path d="M17 9H1.500M8.500 2L1.500 9l7 7" fill="none" stroke=${k} stroke-width="1.300"/>`)}</div>
        <div class="cell">${pic(18, 18, svg`<path d="M1 9h15.500M9.500 2l7 7-7 7" fill="none" stroke=${k} stroke-width="1.300"/>`)}</div>
        <div class="cell">${pic(18, 18, svg`<path d="M15.500 5.500A7.500 7.500 0 1 0 16.500 9M16 1v5h-5" fill="none" stroke=${k} stroke-width="1.300"/>`)}</div>
        <div class="cell">${pic(18, 18, svg`<path d="M2.500 8.500L9 2l6.500 6.500V16h-4v-5q0-1.500-2.500-1.500T6.500 11v5h-4z" fill="none" stroke=${k} stroke-width="1.300"/>`)}</div>
        <div class="addr">
          ${pic(14, 16, svg`<rect x="1.600" y="5.600" width="10.800" height="9" rx="1.500" fill="none" stroke="#666" stroke-width="1.200"/><path d="M4 5.500V4a3 3 0 0 1 6 0v1.500" fill="none" stroke="#666" stroke-width="1.200"/><circle cx="7" cy="10.200" r="1" fill="#666"/>`)}
          <div class="url">${ft(298, html`https://<span>chevron.beyondtrustcloud.com</span>/console#`)}</div>
          ${pic(18, 17, svg`<path d="M9 0l2.600 5.600 6.200.7-4.600 4.200 1.300 6.100L9 13.500l-5.500 3.100 1.300-6.100L.2 6.300l6.200-.7z" fill="#0078d4"/>`)}
        </div>
        <div class="exts">
          <div class="cell">${pic(16, 16, svg`<rect x=".5" y="1" width="14" height="13" rx="3" fill="#555"/><path d="M3 9V6q0-2 2-2t2 2v3M7 7q0-3 2.500-3T12 7" fill="none" stroke="#ddd" stroke-width="1.300"/><rect x="7.500" y="8.500" width="7" height="6" rx="1.500" fill="#f7f7f7" stroke="#888"/>`)}</div>
          <div class="cell">${ui(BL)}</div>
          <div class="cell">${pic(18, 18, svg`<path d="M4.500 4.500H8a2 2 0 1 1 3.600 0h3.900V8a1.900 1.900 0 1 0 0 3.600V16h-3.900a2 2 0 1 0-3.600 0H4.500v-4.500a2 2 0 1 1 0-3.500z" transform="translate(1 -.6) scale(.92)" fill="none" stroke=${k} stroke-width="1.400"/>`)}</div>
          <div class="bar"></div>
          <div class="cell">${pic(18, 18, svg`<path d="M8.500 12.800L4 15.500l1-5-4-3.500 5-.5L8 1.800l2 4.700h7M11 10.500h6M11 14h6" fill="none" stroke=${k} stroke-width="1.300"/>`)}</div>
          <div class="cell">${pic(18, 18, svg`<rect x="5.500" y="6" width="11" height="10.500" rx="2" fill="none" stroke=${k} stroke-width="1.300"/><path d="M11 8.500v5.500M8.200 11.200h5.600M3.500 12L1.600 5q-.4-2 1.400-2.600l7-1.400q1.600-.2 2.300 1.400L13 4" fill="none" stroke=${k} stroke-width="1.300"/>`)}</div>
          <div class="cell" style="width:48px">${pic(23, 23, svg`<circle cx="11.500" cy="11.500" r="11" fill="#d2d0ce"/><circle cx="11.500" cy="8.300" r="4.800" fill="#8a8886"/><path d="M4 18.500q1-4.500 7.500-4.500t7.500 4.500q-7.500 6-15 0z" fill="#8a8886"/>`)}</div>
          <div class="cell">${pic(16, 4, svg`<circle cx="2.500" cy="2" r="1.300"/><circle cx="8" cy="2" r="1.300"/><circle cx="13.500" cy="2" r="1.300"/>`)}</div>
        </div>
      </div>
      <div class="bm">
        ${BOOKMARKS.map(([i, t, w]) => html`<div class="item">${bmIcon(i)}${ft(w, t)}</div>`)}
        <div class="more">${pic(10, 14, svg`<path d="M2 1.500L7.500 7 2 12.500" fill="none" stroke="#444" stroke-width="1.500"/>`)}</div>
      </div>
      <div class="head">
        <div class="hc">${pic(23, 20, svg`<path d="M11.500 0L23 10.500h-3V20h-6v-7H9v7H3v-9.500H0z" fill="#fff"/>`)}</div>
        <div class="hc">${pic(20, 20, svg`<circle cx="8" cy="8" r="6.300" fill="none" stroke="#fff" stroke-width="2.600"/><path d="M12.500 12.500l6.500 6.500" stroke="#fff" stroke-width="3.200"/>`)}</div>
        <div class="sess">${ft(223, "Current Session: SG_EPS_RSS_Lab")}</div>
        <div class="dot"></div>${ft(61, "1 session")}
        <div class="hr">
          <div class="a">${pic(31, 24, svg`${mon(1, 3, 26, 16, "#fff")}<circle cx="23.500" cy="17" r="6.800" fill="#ff5500"/><circle cx="23.500" cy="17" r="5.500" fill="none" stroke="#fff" stroke-width="1.200"/><path d="M21 14l5-.8v4l-2.500 3.300-2.500-3z" fill="#fff"/>`)}${ft(185, "Desktop Representative Console")}</div>
          <div class="o">${pic(20, 22, svg`<path d="M16 6V2H2v18h14v-4" fill="none" stroke="#fff" stroke-width="1.800"/><path d="M5 11h13M13.500 6.500L18 11l-4.500 4.500" fill="none" stroke="#fff" stroke-width="1.800"/>`)}${ft(39, "Logout")}</div>
        </div>
      </div>
      <div class="tools">
        ${ft(117, "SCREEN SHARING")}<div class="tri"></div><div class="v" style="margin-right:21px"></div>
        ${LEFT.map((i) => html`<div class="ic">${pic(36, 32, i)}</div>`)}
        <div class="grow"></div>
        ${RIGHT.map((i) => html`<div class="ic">${pic(36, 32, i)}</div>`)}
        <div class="v" style="margin:0 21px 0 19px"></div>
        ${PEOPLE.map((i) => html`<div class="pp">${pic(36, 32, i)}</div>`)}
        <div class="v" style="margin:0 21px 0 18px"></div>
        <div class="pp">${pic(36, 32, svg`<path d="M20 12q9 1 8.500 8-.5 3-2 4l1.500 4-5-2q-6 0-8-4 6-2 5-10z" fill="#6b7283" stroke="${G}" stroke-width="1"/><path d="M16 5q8 .5 8.500 8-.5 8-9 8l-5.500 2 1.500-3.500Q7 17 7.500 12.500 8.500 5 16 5z" fill="#1e2431" stroke="${G}" stroke-width="1.400"/>`)}</div>
        <div class="v" style="margin:0 21px 0 20px"></div>
        <div class="pp" style="margin-right:20px">${pic(36, 32, svg`<path d="M8 6l20 20M28 6L8 26" stroke="#b3b8c4" stroke-width="4"/>`)}</div>
      </div>
      <div class="main">
        <div class="stage"><remote-desktop></remote-desktop></div>
        <div class="chat">
          <div class="ch">${pic(20, 22, svg`<rect x="0" y="1" width="9" height="20" rx="2" fill="#fff"/><path d="M9 11h8M12 6l5.500 5-5.500 5" fill="none" stroke="#fff" stroke-width="2"/>`)}${ft(92, "Everyone")}</div>
          <div class="log">
            <div class="msg">${ft(237, "(20:04:55) Patricio Calacasan can now view")}${ft(194, "and control the customer's screen.")}</div>
            <div class="sb"></div>
          </div>
          <div class="rule"></div>
          <div class="box"><div class="ph">${ft(108, "Type your message")}</div><div class="sb"></div></div>
          <div class="send">${ft(37, "SEND")}</div>
        </div>
      </div>`;
  }
}
